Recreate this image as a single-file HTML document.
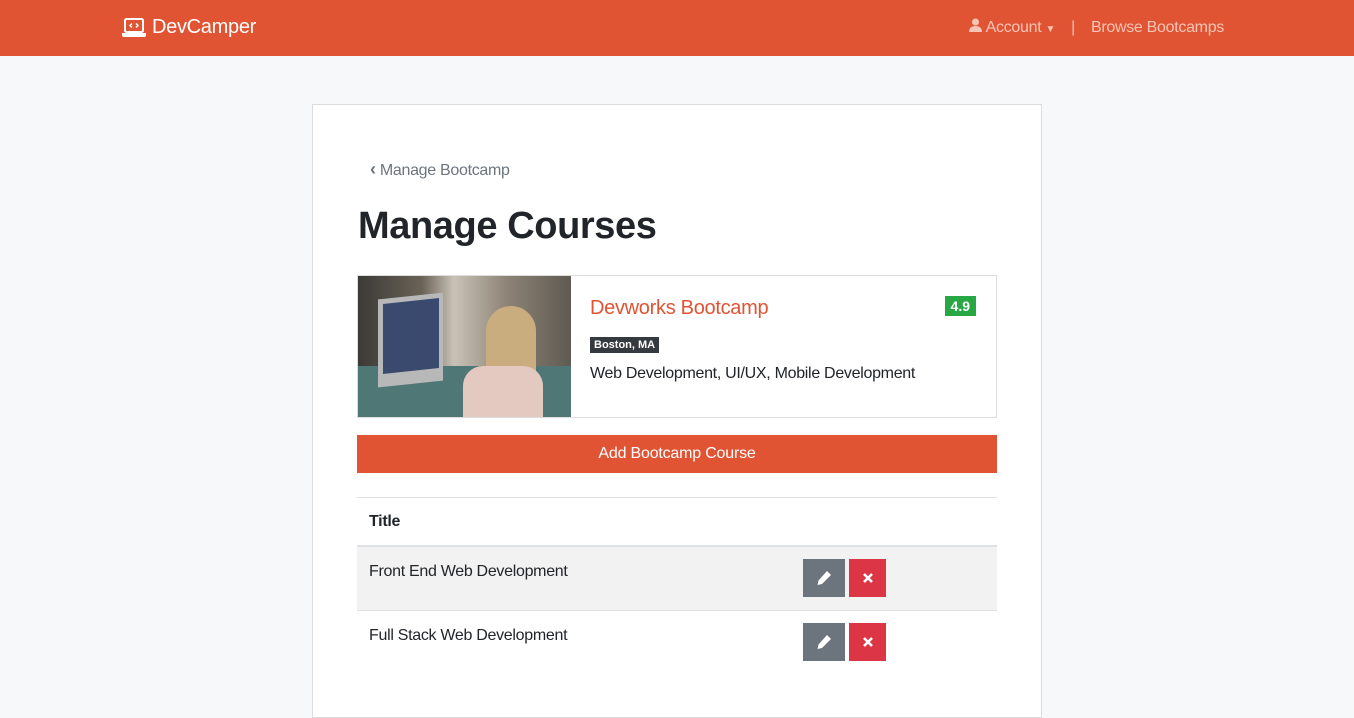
<!DOCTYPE html>
<html><head><meta charset="utf-8"><style>
*{box-sizing:border-box;margin:0;padding:0}
body{width:1354px;height:718px;overflow:hidden;background:#f7f8fa;font-family:"Liberation Sans",Roboto,sans-serif;color:#212529}
.nav{height:56px;background:#e05433;position:relative;color:#fff}
.brand{position:absolute;left:122px;top:16px;font-size:20px;display:flex;align-items:center;gap:6px;letter-spacing:-0.3px}
.navr{position:absolute;right:130px;top:18px;font-size:16px;color:#f7c4b5;display:flex;gap:16px;align-items:center;letter-spacing:-0.3px}
.card{position:absolute;left:312px;top:104px;width:730px;height:614px;background:#fff;border:1px solid #dcdcdc}
.back{position:absolute;left:57px;top:54px;font-size:16px;color:#6c757d;letter-spacing:-0.3px}
h1{position:absolute;left:45px;top:100px;font-size:38px;font-weight:bold;letter-spacing:-0.4px}
.bc{position:absolute;left:44px;top:170px;width:640px;height:143px;border:1px solid #ddd;display:flex}
.img{width:213px;height:141px;position:relative;overflow:hidden;background:linear-gradient(90deg,#3b3a36 0%,#6a6257 30%,#c9c2b6 45%,#8d8376 70%,#5f5a52 100%)}
.info{position:relative;flex:1}
.title{position:absolute;left:19px;top:21px;color:#e05433;font-size:20px;letter-spacing:-0.3px}
.rate{position:absolute;right:20px;top:20px;background:#28a745;color:#fff;font-weight:bold;font-size:14px;padding:2px 6px}
.loc{position:absolute;left:19px;top:61px;background:#343a40;color:#fff;font-size:11px;font-weight:bold;padding:2px 4px}
.desc{position:absolute;left:19px;top:89px;font-size:16px;letter-spacing:-0.3px}
.btn{position:absolute;left:44px;top:330px;width:640px;height:38px;background:#e05433;color:#fff;font-size:16px;text-align:center;line-height:38px;letter-spacing:-0.2px}
.tbl{position:absolute;left:44px;top:392px;width:640px}
.row{height:63px;border-top:1px solid #dee2e6;position:relative;font-size:16px;letter-spacing:-0.3px}
.row span{position:absolute;left:12px;top:16px}
.hd{height:50px;border-bottom:2px solid #dee2e6;font-weight:bold}
.hd span{top:15px}
.ed{position:absolute;left:446px;top:12px;width:42px;height:38px;background:#6c757d;display:flex;align-items:center;justify-content:center}
.x{position:absolute;left:492px;top:12px;width:37px;height:38px;background:#dc3545;display:flex;align-items:center;justify-content:center}
</style></head><body>
<div class="nav">
<div class="brand"><svg width="24" height="20" viewBox="0 0 24 20"><rect x="3" y="1" width="18" height="13" rx="1.5" fill="none" stroke="#fff" stroke-width="2"/><path d="M10 5.5l-2 2 2 2M14 5.5l2 2-2 2" stroke="#fff" stroke-width="1.5" fill="none"/><path d="M0 15h24v2a2 2 0 0 1-2 2H2a2 2 0 0 1-2-2z" fill="#fff"/></svg>DevCamper</div>
<div class="navr"><span><svg width="13" height="14" viewBox="0 0 13 14"><circle cx="6.5" cy="4" r="3.5" fill="#f7c4b5"/><path d="M0 14c0-4 2.5-6 6.5-6s6.5 2 6.5 6z" fill="#f7c4b5"/></svg> Account <span style="font-size:10px">▼</span></span><span>|</span><span>Browse Bootcamps</span></div>
</div>
<div class="card">
<div class="back"><b style="font-size:18px">‹</b> Manage Bootcamp</div>
<h1>Manage Courses</h1>
<div class="bc">
<div class="img">
<div style="position:absolute;left:0;top:90px;width:213px;height:51px;background:#4f7776"></div>
<div style="position:absolute;left:20px;top:20px;width:65px;height:88px;background:#b8b8b8;transform:skewY(-6deg)"></div>
<div style="position:absolute;left:25px;top:25px;width:56px;height:70px;background:#3a4a6e;transform:skewY(-6deg)"></div>
<div style="position:absolute;left:128px;top:30px;width:50px;height:90px;background:#c9ad7f;border-radius:25px 25px 5px 5px"></div>
<div style="position:absolute;left:105px;top:90px;width:80px;height:51px;background:#e3c9bf;border-radius:20px 20px 0 0"></div>
</div>
<div class="info"><div class="title">Devworks Bootcamp</div><div class="rate">4.9</div><div class="loc">Boston, MA</div><div class="desc">Web Development, UI/UX, Mobile Development</div></div>
</div>
<div class="btn">Add Bootcamp Course</div>
<div class="tbl">
<div class="row hd"><span>Title</span></div>
<div class="row" style="background:#f2f2f2;border-top:none"><span>Front End Web Development</span><div class="ed"><svg width="16" height="16" viewBox="0 0 16 16"><path d="M11 1l4 4-9 9-4.5 1 1-4.5z" fill="#fff"/></svg></div><div class="x"><svg width="12" height="12" viewBox="0 0 12 12"><path d="M2 2l8 8M10 2l-8 8" stroke="#fff" stroke-width="2.6"/></svg></div></div>
<div class="row"><span>Full Stack Web Development</span><div class="ed"><svg width="16" height="16" viewBox="0 0 16 16"><path d="M11 1l4 4-9 9-4.5 1 1-4.5z" fill="#fff"/></svg></div><div class="x"><svg width="12" height="12" viewBox="0 0 12 12"><path d="M2 2l8 8M10 2l-8 8" stroke="#fff" stroke-width="2.6"/></svg></div></div>
</div>
</div>
</body></html>
